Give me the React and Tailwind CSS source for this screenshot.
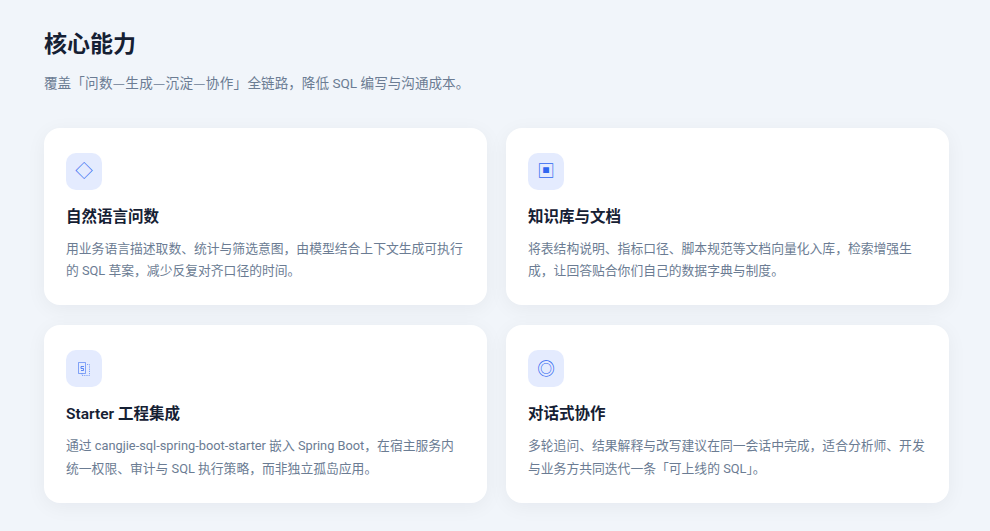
import React from "react";

// Pages icon: solid page in front, dashed page behind
const PagesIcon = () => (
    <svg width="12" height="14" viewBox="0 0 12 14" fill="none" stroke="#2f66f0" strokeWidth="1">
        <path d="M0.5 0.5H7.5V11.5H0.5Z" strokeOpacity="0.55" />
        <path d="M9 2.5H11.5V13.5H4V11.5" strokeOpacity="0.55" strokeDasharray="1.2 1" />
        <path d="M6 4.5H3V6.5H5.5V8.5H3" strokeOpacity="0.75" />
    </svg>
);

const features = [
    {
        icon: "◇",
        title: "自然语言问数",
        desc: "用业务语言描述取数、统计与筛选意图，由模型结合上下文生成可执行的 SQL 草案，减少反复对齐口径的时间。",
    },
    {
        icon: "▣",
        title: "知识库与文档",
        desc: "将表结构说明、指标口径、脚本规范等文档向量化入库，检索增强生成，让回答贴合你们自己的数据字典与制度。",
    },
    {
        icon: <PagesIcon />,
        title: "Starter 工程集成",
        desc: "通过 cangjie-sql-spring-boot-starter 嵌入 Spring Boot，在宿主服务内统一权限、审计与 SQL 执行策略，而非独立孤岛应用。",
    },
    {
        icon: "◎",
        title: "对话式协作",
        desc: "多轮追问、结果解释与改写建议在同一会话中完成，适合分析师、开发与业务方共同迭代一条「可上线的 SQL」。",
    },
];

const App = () => {
    return (
        <div className="min-h-[531px] bg-[#f1f5fa] pl-[44px] pr-[41px] pt-[26px] font-['Roboto','Noto_Sans_CJK_SC',sans-serif]">
            <h2 className="text-[23px] leading-[38px] font-bold text-[#152033]">核心能力</h2>
            <p className="mt-[6px] text-[13.6px] leading-[24px] text-[#6b7c93]">
                覆盖
                <span className="font-['Noto_Sans_CJK_SC',sans-serif] tracking-[0.3px]">「问数—生成—沉淀—协作」</span>
                全链路，降低 SQL 编写与沟通成本。
            </p>
            <div className="mt-[33px] grid grid-cols-2 gap-x-[19px] gap-y-[20px]">
                {features.map((f) => (
                    <div
                        key={f.title}
                        className="rounded-2xl bg-white px-[22px] pt-[25px] pb-[22.6px] shadow-[0_4px_20px_rgba(15,23,42,0.05)]"
                    >
                        <div className="flex h-[37px] w-[36px] items-center justify-center rounded-[10px] bg-[#e4ebfe] text-[17.6px] text-[#2f66f0]">
                            {f.icon}
                        </div>
                        <h3 className="mt-[15px] text-[15.5px] leading-[24px] font-semibold text-[#152033]">{f.title}</h3>
                        <p className="mt-[9px] text-[12.8px] leading-[22.4px] text-[#6b7c93]">{f.desc}</p>
                    </div>
                ))}
            </div>
        </div>
    );
};

export default App;
